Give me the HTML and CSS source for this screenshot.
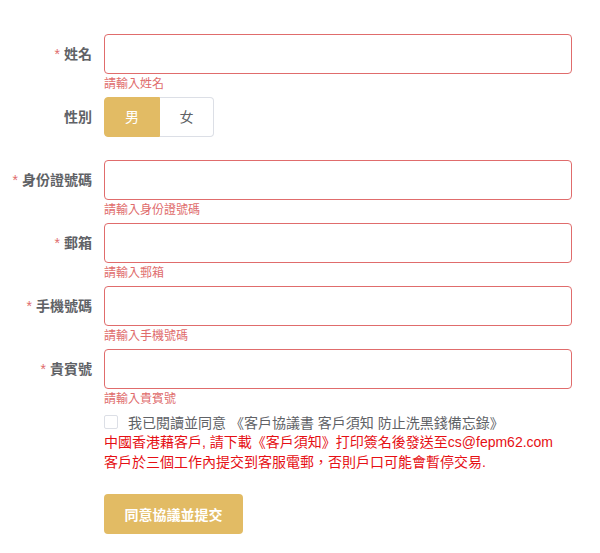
FILE: index.html
```html
<!DOCTYPE html>
<html lang="zh-Hant">
<head>
<meta charset="utf-8">
<link rel="stylesheet" href="styles.css">
</head>
<body>
<form class="form">
  <div class="item">
    <label class="label"><span class="req">*</span>姓名</label>
    <div class="field">
      <input class="input invalid" type="text">
      <div class="error">請輸入姓名</div>
    </div>
  </div>
  <div class="item">
    <label class="label">性別</label>
    <div class="field">
      <div class="radio-group">
        <span class="radio active">男</span>
        <span class="radio">女</span>
      </div>
    </div>
  </div>
  <div class="item">
    <label class="label"><span class="req">*</span>身份證號碼</label>
    <div class="field">
      <input class="input invalid" type="text">
      <div class="error">請輸入身份證號碼</div>
    </div>
  </div>
  <div class="item">
    <label class="label"><span class="req">*</span>郵箱</label>
    <div class="field">
      <input class="input invalid" type="text">
      <div class="error">請輸入郵箱</div>
    </div>
  </div>
  <div class="item">
    <label class="label"><span class="req">*</span>手機號碼</label>
    <div class="field">
      <input class="input invalid" type="text">
      <div class="error">請輸入手機號碼</div>
    </div>
  </div>
  <div class="item">
    <label class="label"><span class="req">*</span>貴賓號</label>
    <div class="field">
      <input class="input invalid" type="text">
      <div class="error">請輸入貴賓號</div>
    </div>
  </div>
  <div class="item agree">
    <div class="label"></div>
    <div class="field">
      <div class="check-row">
        <span class="checkbox"></span>
        <span class="check-text">我已閱讀並同意 《客戶協議書 客戶須知 防止洗黑錢備忘錄》</span>
      </div>
      <p class="notice">中國香港藉客戶, 請下載《客戶須知》打印簽名後發送至cs@fepm62.com<br>客戶於三個工作內提交到客服電郵，否則戶口可能會暫停交易.</p>
      <button type="button" class="submit">同意協議並提交</button>
    </div>
  </div>
</form>
</body>
</html>
```

FILE: styles.css
```css
* { box-sizing: border-box; }
html, body { margin: 0; padding: 0; background: #fff; }
body {
  font-family: "Liberation Sans", "Noto Sans CJK TC", sans-serif;
  font-size: 14px;
  color: #606266;
}
.form {
  padding: 34px 28px 0 0;
}
.item {
  display: flex;
  margin-bottom: 23px;
}
.label {
  width: 104px;
  flex: none;
  padding-right: 12px;
  text-align: right;
  line-height: 40px;
  font-weight: 700;
  color: #606266;
  font-size: 14px;
}
.req {
  color: #e06c6c;
  margin-right: 4px;
  font-weight: 400;
}
.field {
  flex: 1;
  position: relative;
}
.input {
  display: block;
  width: 100%;
  height: 40px;
  border: 1px solid #dcdfe6;
  border-radius: 4px;
  padding: 0 15px;
  font: inherit;
  outline: none;
  background: #fff;
}
.input.invalid { border-color: #e06c6c; }
.error {
  position: absolute;
  top: 100%;
  left: 0;
  padding-top: 4px;
  font-size: 12px;
  line-height: 1;
  color: #e06c6c;
}
.radio-group {
  display: flex;
}
.radio {
  height: 40px;
  line-height: 38px;
  border: 1px solid #dcdfe6;
  text-align: center;
  font-size: 14px;
  color: #606266;
  background: #fff;
}
.radio:first-child {
  width: 56px;
  border-radius: 4px 0 0 4px;
}
.radio:last-child {
  width: 54px;
  border-left: 0;
  border-radius: 0 4px 4px 0;
}
.radio.active {
  background: #e2bb64;
  border-color: #e2bb64;
  color: #fff;
}
.agree .label { line-height: 20px; }
.check-row {
  display: flex;
  align-items: center;
  height: 20px;
}
.checkbox {
  width: 14px;
  height: 14px;
  border: 1px solid #dcdfe6;
  border-radius: 2px;
  background: #fff;
  margin-right: 10px;
  flex: none;
}
.check-text {
  font-size: 14px;
  color: #606266;
}
.notice {
  margin: 0;
  font-size: 14px;
  line-height: 20px;
  color: #e60f14;
}
.submit {
  margin-top: 22px;
  width: 139px;
  height: 40px;
  border: 0;
  border-radius: 4px;
  background: #e2bb64;
  color: #fff;
  font: inherit;
  font-weight: 700;
  font-size: 14px;
  padding: 0;
}
```
